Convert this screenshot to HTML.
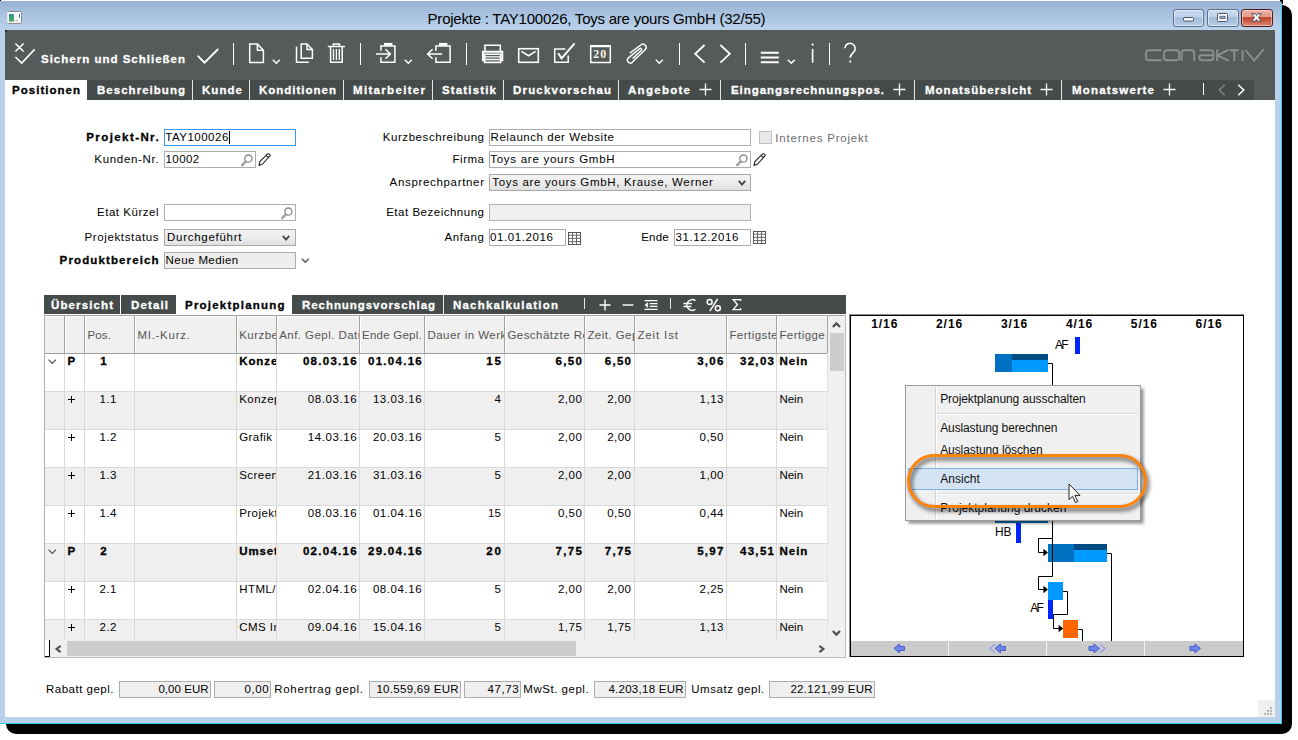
<!DOCTYPE html>
<html><head><meta charset="utf-8"><title>Projekte</title><style>
html,body{margin:0;padding:0;}
body{width:1298px;height:740px;overflow:hidden;background:#fff;position:relative;font-family:"Liberation Sans",sans-serif;}
.a{position:absolute;box-sizing:border-box;}
.t{position:absolute;white-space:pre;display:block;}
svg{position:absolute;overflow:visible;}
.inp{position:absolute;box-sizing:border-box;border:1px solid #abadb3;background:#fff;}
.sel{position:absolute;box-sizing:border-box;border:1px solid #a9a9a9;background:linear-gradient(#f3f3f3,#ededed 45%,#e1e1e1);}
.ro{position:absolute;box-sizing:border-box;border:1px solid #b4b4b4;background:#efefef;}
</style></head><body>
<div class="a" style="left:6px;top:5px;width:1286px;height:729px;background:#000;border-radius:10px;"></div>
<div class="a" style="left:0px;top:0px;width:1px;height:1px;background:#000;"></div>
<div class="a" style="left:1280px;top:0px;width:3px;height:4px;background:#000;"></div>
<div class="a" style="left:0px;top:1px;width:1282px;height:723px;background:linear-gradient(#98b3d3 0px,#a9c3e0 14px,#bbd2ea 29px,#b9d1ea 30px);border-top-right-radius:3px;"></div>
<div class="a" style="left:1281px;top:4px;width:1px;height:720px;background:#2fd0f0;"></div>
<div class="a" style="left:0px;top:723px;width:1282px;height:1px;background:#2fd0f0;"></div>
<div class="a" style="left:5px;top:30px;width:1270px;height:687px;background:#fff;"></div>
<svg style="left:7px;top:11px" width="15" height="13" viewBox="0 0 15 13"><defs><linearGradient id="ig" x1="0" y1="0" x2="0.4" y2="1"><stop offset="0" stop-color="#3a78b8"/><stop offset="0.45" stop-color="#3f9a8a"/><stop offset="1" stop-color="#43ad5e"/></linearGradient><linearGradient id="ih" x1="0" y1="0" x2="0" y2="1"><stop offset="0" stop-color="#2f66b8"/><stop offset="1" stop-color="#4aa84a"/></linearGradient></defs><rect x="0.5" y="0.5" width="14" height="12" rx="1" fill="#f6f6f6" stroke="#8a8a8a"/><path d="M0.5 1 V12" stroke="#e8e8e8"/><rect x="2" y="3" width="5" height="7.6" fill="url(#ig)"/><rect x="8.4" y="9" width="2.8" height="1.6" fill="#c4c4c4"/><rect x="12" y="3" width="1" height="3.8" fill="url(#ih)"/></svg>
<span class="t" style="left:427.60px;top:11.00px;font-size:15px;line-height:15px;color:#000;letter-spacing:-0.230px;">Projekte : TAY100026, Toys are yours GmbH (32/55)</span>
<div class="a" style="left:1173px;top:9px;width:31px;height:18px;border:1px solid #5b6f8e;border-radius:3px;background:linear-gradient(#c6d8ee 0,#bed2ea 46%,#a3bcda 47%,#b4cae4 100%);box-shadow:inset 0 0 0 1px rgba(255,255,255,.55);"></div>
<div class="a" style="left:1207px;top:9px;width:32px;height:18px;border:1px solid #5b6f8e;border-radius:3px;background:linear-gradient(#c6d8ee 0,#bed2ea 46%,#a3bcda 47%,#b4cae4 100%);box-shadow:inset 0 0 0 1px rgba(255,255,255,.55);"></div>
<div class="a" style="left:1241px;top:9px;width:32px;height:18px;border:1px solid #561820;border-radius:3px;background:linear-gradient(#eab0a2 0,#e39a89 46%,#c1442a 47%,#d98570 100%);box-shadow:inset 0 0 0 1px rgba(255,255,255,.45);"></div>
<svg style="left:1183px;top:17px" width="11" height="5" viewBox="0 0 11 5"><rect x="0.5" y="0.5" width="10" height="3.6" rx="1" fill="#f6f6f6" stroke="#4a5670"/></svg>
<svg style="left:1217px;top:13px" width="11" height="9" viewBox="0 0 11 9"><rect x="0.5" y="0.5" width="10" height="8" rx="1" fill="#f6f6f6" stroke="#4a5670"/><rect x="3" y="3.3" width="5" height="2.2" fill="#9ab3d3" stroke="#4a5670" stroke-width=".8"/></svg>
<svg style="left:1251px;top:13px" width="11" height="9" viewBox="0 0 11 9"><path d="M0.7 0.7 L4.1 0.7 L5.5 2.5 L6.9 0.7 L10.3 0.7 L7.5 4.5 L10.3 8.3 L6.9 8.3 L5.5 6.5 L4.1 8.3 L0.7 8.3 L3.5 4.5 Z" fill="#f8f8f8" stroke="#4a4660" stroke-width=".9" stroke-linejoin="round"/></svg>
<div class="a" style="left:5px;top:30px;width:1270px;height:70px;background:#545b5a;"></div>
<div class="a" style="left:5px;top:30px;width:2px;height:2px;background:#111;border-bottom-right-radius:2px;"></div>
<svg style="left:14px;top:42px" width="22" height="24" viewBox="0 0 22 24" fill="none" stroke="#fff" stroke-width="1.6" ><path d="M1.4 1.5 L9.6 9.5 M9.6 1.5 L1.4 9.5"/><path d="M1.4 15 L7.7 21 L20.6 7.4"/></svg>
<span class="t" style="left:41.00px;top:54.00px;font-size:11.5px;line-height:11.5px;color:#fff;font-weight:bold;-webkit-text-stroke:0.3px;letter-spacing:1.002px;">Sichern und Schließen</span>
<svg style="left:197px;top:48px" width="22" height="17" viewBox="0 0 22 17" fill="none" stroke="#fff" stroke-width="1.9" ><path d="M1.3 8.3 L7.5 14.7 L20.7 1.5" stroke-linecap="round"/></svg>
<div class="a" style="left:232.85px;top:43px;width:1.3499999999999943px;height:22px;background:#fff;"></div>
<div class="a" style="left:359.85px;top:43px;width:1.349999999999966px;height:22px;background:#fff;"></div>
<div class="a" style="left:465.85px;top:43px;width:1.349999999999966px;height:22px;background:#fff;"></div>
<div class="a" style="left:678.85px;top:43px;width:1.3500000000000227px;height:22px;background:#fff;"></div>
<div class="a" style="left:744.85px;top:43px;width:1.3500000000000227px;height:22px;background:#fff;"></div>
<div class="a" style="left:828.85px;top:43px;width:1.3500000000000227px;height:22px;background:#fff;"></div>
<svg style="left:248px;top:43px" width="18" height="21" viewBox="0 0 18 21" fill="none" stroke="#fff" stroke-width="1.5" ><path d="M1.7 1.1 H9.4 L15.4 7.2 V19.4 H1.7 Z"/><path d="M9.4 1.1 V7.2 H15.4"/></svg>
<svg style="left:272px;top:59px" width="9" height="6" viewBox="0 0 9 6" fill="none" stroke="#fff" stroke-width="1.5" ><path d="M0.8 0.8 L4.3 4.2 L7.8 0.8"/></svg>
<svg style="left:295px;top:43px" width="20" height="21" viewBox="0 0 20 21" fill="none" stroke="#fff" stroke-width="1.5" ><path d="M6.2 1 H12 L17.4 6.6 V15.2 H6.2 Z"/><path d="M12 1 V6.6 H17.4"/><path d="M1.5 3.6 V19.2 H13.8"/></svg>
<svg style="left:327px;top:42px" width="19" height="22" viewBox="0 0 19 22" fill="none" stroke="#fff" stroke-width="1.5" ><path d="M0.8 4.5 H18"/><path d="M6.4 4.4 V2 H12.4 V4.4"/><path d="M3.6 4.8 V20.2 H15.2 V4.8"/><path d="M6.5 7 V18 M9.4 7 V18 M12.3 7 V18" stroke-width="1.3"/></svg>
<svg style="left:375px;top:42px" width="23" height="22" viewBox="0 0 23 22" fill="none" stroke="#fff" stroke-width="1.5" ><path d="M5.9 8.8 V3.9 H19.9 V20.3 H5.9 V15.2"/><path d="M9 2.3 H17.4" stroke-width="2.8"/><path d="M1 12 H15 M10.4 7.2 L15.4 12 L10.4 16.8"/></svg>
<svg style="left:403.5px;top:59px" width="9" height="6" viewBox="0 0 9 6" fill="none" stroke="#fff" stroke-width="1.5" ><path d="M0.8 0.8 L4.3 4.2 L7.8 0.8"/></svg>
<svg style="left:426px;top:42px" width="26" height="22" viewBox="0 0 26 22" fill="none" stroke="#fff" stroke-width="1.5" ><path d="M9.9 8.8 V3.9 H24.1 V20.3 H9.9 V15.2"/><path d="M13 2.3 H21.4" stroke-width="2.8"/><path d="M16.2 12 H2 M6.6 7.2 L1.6 12 L6.6 16.8"/></svg>
<svg style="left:481px;top:43px" width="24" height="21" viewBox="0 0 24 21" fill="none" stroke="#fff" stroke-width="1.6" ><path d="M3.9 8 V2.2 H19.3 V8"/><path d="M3.6 17.2 H1.9 V8.8 H21.3 V17.2 H19.6" stroke-width="2"/><path d="M3.6 11.2 H19.6 V19.4 H3.6 Z"/><path d="M4 13.9 H19.2 M4 16.5 H19.2" stroke-width="1.3"/></svg>
<svg style="left:517px;top:47px" width="23" height="17" viewBox="0 0 23 17" fill="none" stroke="#fff" stroke-width="1.6" ><rect x="1.7" y="1.7" width="19.6" height="13.6"/><path d="M4.4 4.4 L11.5 8.8 L18.6 4.4"/></svg>
<svg style="left:553px;top:42px" width="23" height="22" viewBox="0 0 23 22" fill="none" stroke="#fff" stroke-width="1.5" ><path d="M15.2 13.4 V20.2 H1.7 V7.1 H12.4"/><path d="M5.2 11.2 L8.6 16.4 L21.6 1.4" stroke-width="2"/></svg>
<svg style="left:589px;top:44px" width="23" height="20" viewBox="0 0 23 20" fill="none" stroke="#fff" stroke-width="1.5" ><rect x="1.7" y="1.9" width="19.6" height="16.6"/><path d="M1 2.1 H22" stroke-width="2.2"/></svg>
<span class="t" style="left:593.20px;top:48.00px;font-size:12px;line-height:12px;color:#f6f0e2;font-weight:bold;letter-spacing:1.052px;font-family:'Liberation Serif',serif;">20</span>
<svg style="left:0px;top:0px" width="1298" height="740" viewBox="0 0 1298 740" fill="none" stroke="#fff" stroke-width="1.4" ><path transform="translate(626.6,61.6) rotate(-41)" d="M8 -4.3 L21.6 -3.2 A3.2 3.2 0 0 1 21.6 3.2 L3.8 4.3 A2.95 2.95 0 0 1 3.8 -1.6 L18.4 -1.15 A1.15 1.15 0 0 1 18.4 1.15 L6.5 1.7"/></svg>
<svg style="left:654.5px;top:59px" width="9" height="6" viewBox="0 0 9 6" fill="none" stroke="#fff" stroke-width="1.5" ><path d="M0.8 0.8 L4.3 4.2 L7.8 0.8"/></svg>
<svg style="left:694px;top:44px" width="12" height="20" viewBox="0 0 12 20" fill="none" stroke="#fff" stroke-width="1.8" ><path d="M10.6 1 L1.2 9.8 L10.6 18.6"/></svg>
<svg style="left:719px;top:44px" width="12" height="20" viewBox="0 0 12 20" fill="none" stroke="#fff" stroke-width="1.8" ><path d="M1.4 1 L10.8 9.8 L1.4 18.6"/></svg>
<svg style="left:760px;top:50px" width="20" height="14" viewBox="0 0 20 14" fill="none" stroke="#fff" stroke-width="1.9" ><path d="M0.8 2.7 H18.8 M0.8 7.5 H18.8 M0.8 12.3 H18.8"/></svg>
<svg style="left:786.5px;top:59px" width="9" height="6" viewBox="0 0 9 6" fill="none" stroke="#fff" stroke-width="1.5" ><path d="M0.8 0.8 L4.3 4.2 L7.8 0.8"/></svg>
<svg style="left:808px;top:42px" width="10" height="22" viewBox="0 0 10 22" fill="none" stroke="#fff" stroke-width="1.6" ><path d="M4.6 7 V20.8" stroke-width="1.6"/><circle cx="4.6" cy="2.6" r="1.1" fill="#fff" stroke="none"/></svg>
<svg style="left:843px;top:42px" width="15" height="22" viewBox="0 0 15 22" fill="none" stroke="#fff" stroke-width="1.6" ><path d="M1.8 6.2 a5.2 5.2 0 1 1 8.4 4.4 C8 12.4 7.2 13.2 7.2 15.8" stroke-width="1.6"/><circle cx="7.2" cy="19.6" r="1.1" fill="#fff" stroke="none"/></svg>
<svg style="left:1145px;top:49px" width="120" height="13" viewBox="0 0 120 13" fill="none" stroke="#8b9190" stroke-width="1.9" ><path d="M16.6 1.2 H4 Q1 1.2 1 4 V8.4 Q1 11.2 4 11.2 H16.6"/><rect x="19" y="1.2" width="15.2" height="10" rx="2.8"/><path d="M36.6 12 V4 Q36.6 1.2 39.4 1.2 H46.4 Q49.2 1.2 49.2 4 V12"/><path d="M54.6 1.2 H65.6 Q68.4 1.2 68.4 4 V8.4 Q68.4 11.2 65.6 11.2 H57 Q54.2 11.2 54.2 8.6 Q54.2 6.2 57 6.2 H68.4"/><path d="M72.2 0.4 V12 M83.6 0.6 L72.6 6.4 L83.8 11.8"/><path d="M84.8 1.2 H93.8 M89.3 1.2 V12"/><path d="M97.6 1.2 V12"/><path d="M100.4 1 L109.2 11.6 L118.6 0.4"/></svg>
<div class="a" style="left:5px;top:80px;width:1248.5px;height:20px;background:#454b4a;"></div>
<div class="a" style="left:5px;top:80px;width:82px;height:20px;background:#fff;"></div>
<span class="t" style="left:12.00px;top:85.00px;font-size:11.5px;line-height:11.5px;color:#000;font-weight:bold;-webkit-text-stroke:0.3px;letter-spacing:1.024px;">Positionen</span>
<span class="t" style="left:97.00px;top:85.00px;font-size:11.5px;line-height:11.5px;color:#fff;font-weight:bold;-webkit-text-stroke:0.3px;letter-spacing:1.029px;">Beschreibung</span>
<span class="t" style="left:202.00px;top:85.00px;font-size:11.5px;line-height:11.5px;color:#fff;font-weight:bold;-webkit-text-stroke:0.3px;letter-spacing:1.056px;">Kunde</span>
<span class="t" style="left:259.00px;top:85.00px;font-size:11.5px;line-height:11.5px;color:#fff;font-weight:bold;-webkit-text-stroke:0.3px;letter-spacing:0.993px;">Konditionen</span>
<span class="t" style="left:353.00px;top:85.00px;font-size:11.5px;line-height:11.5px;color:#fff;font-weight:bold;-webkit-text-stroke:0.3px;letter-spacing:1.321px;">Mitarbeiter</span>
<span class="t" style="left:442.00px;top:85.00px;font-size:11.5px;line-height:11.5px;color:#fff;font-weight:bold;-webkit-text-stroke:0.3px;letter-spacing:1.158px;">Statistik</span>
<span class="t" style="left:513.00px;top:85.00px;font-size:11.5px;line-height:11.5px;color:#fff;font-weight:bold;-webkit-text-stroke:0.3px;letter-spacing:1.189px;">Druckvorschau</span>
<span class="t" style="left:628.00px;top:85.00px;font-size:11.5px;line-height:11.5px;color:#fff;font-weight:bold;-webkit-text-stroke:0.3px;letter-spacing:1.282px;">Angebote</span>
<span class="t" style="left:731.00px;top:85.00px;font-size:11.5px;line-height:11.5px;color:#fff;font-weight:bold;-webkit-text-stroke:0.3px;letter-spacing:0.941px;">Eingangsrechnungspos.</span>
<span class="t" style="left:925.00px;top:85.00px;font-size:11.5px;line-height:11.5px;color:#fff;font-weight:bold;-webkit-text-stroke:0.3px;letter-spacing:0.999px;">Monatsübersicht</span>
<span class="t" style="left:1072.00px;top:85.00px;font-size:11.5px;line-height:11.5px;color:#fff;font-weight:bold;-webkit-text-stroke:0.3px;letter-spacing:1.171px;">Monatswerte</span>
<div class="a" style="left:192px;top:80px;width:1px;height:20px;background:#e4e6e6;"></div>
<div class="a" style="left:249px;top:80px;width:1px;height:20px;background:#e4e6e6;"></div>
<div class="a" style="left:343px;top:80px;width:1px;height:20px;background:#e4e6e6;"></div>
<div class="a" style="left:432px;top:80px;width:1px;height:20px;background:#e4e6e6;"></div>
<div class="a" style="left:503px;top:80px;width:1px;height:20px;background:#e4e6e6;"></div>
<div class="a" style="left:618px;top:80px;width:1px;height:20px;background:#e4e6e6;"></div>
<div class="a" style="left:720px;top:80px;width:1px;height:20px;background:#e4e6e6;"></div>
<div class="a" style="left:914px;top:80px;width:1px;height:20px;background:#e4e6e6;"></div>
<div class="a" style="left:1061px;top:80px;width:1px;height:20px;background:#e4e6e6;"></div>
<svg style="left:699px;top:83px" width="13" height="13" viewBox="0 0 13 13" fill="none" stroke="#fff" stroke-width="1.3" ><path d="M6.5 0.5 V12.5 M0.5 6.5 H12.5"/></svg>
<svg style="left:893px;top:83px" width="13" height="13" viewBox="0 0 13 13" fill="none" stroke="#fff" stroke-width="1.3" ><path d="M6.5 0.5 V12.5 M0.5 6.5 H12.5"/></svg>
<svg style="left:1040px;top:83px" width="13" height="13" viewBox="0 0 13 13" fill="none" stroke="#fff" stroke-width="1.3" ><path d="M6.5 0.5 V12.5 M0.5 6.5 H12.5"/></svg>
<svg style="left:1163px;top:83px" width="13" height="13" viewBox="0 0 13 13" fill="none" stroke="#fff" stroke-width="1.3" ><path d="M6.5 0.5 V12.5 M0.5 6.5 H12.5"/></svg>
<div class="a" style="left:1203px;top:83px;width:1px;height:12px;background:#fff;"></div>
<svg style="left:1218px;top:84px" width="8" height="12" viewBox="0 0 8 12" fill="none" stroke="#7f8685" stroke-width="1.4" ><path d="M6.8 0.8 L1.2 6 L6.8 11.2"/></svg>
<svg style="left:1237px;top:84px" width="8" height="12" viewBox="0 0 8 12" fill="none" stroke="#fff" stroke-width="1.5" ><path d="M1.2 0.8 L6.8 6 L1.2 11.2"/></svg>
<span class="t" style="left:86.20px;top:132.00px;font-size:11.5px;line-height:11.5px;color:#000;font-weight:bold;-webkit-text-stroke:0.3px;letter-spacing:1.424px;">Projekt-Nr.</span>
<span class="t" style="left:94.30px;top:154.00px;font-size:11.5px;line-height:11.5px;color:#000;letter-spacing:0.681px;">Kunden-Nr.</span>
<span class="t" style="left:97.00px;top:207.00px;font-size:11.5px;line-height:11.5px;color:#000;letter-spacing:0.535px;">Etat Kürzel</span>
<span class="t" style="left:84.40px;top:232.00px;font-size:11.5px;line-height:11.5px;color:#000;letter-spacing:0.644px;">Projektstatus</span>
<span class="t" style="left:59.60px;top:255.00px;font-size:11.5px;line-height:11.5px;color:#000;font-weight:bold;-webkit-text-stroke:0.3px;letter-spacing:1.127px;">Produktbereich</span>
<span class="t" style="left:382.70px;top:132.00px;font-size:11.5px;line-height:11.5px;color:#000;letter-spacing:0.574px;">Kurzbeschreibung</span>
<span class="t" style="left:452.50px;top:154.00px;font-size:11.5px;line-height:11.5px;color:#000;letter-spacing:0.529px;">Firma</span>
<span class="t" style="left:389.60px;top:177.00px;font-size:11.5px;line-height:11.5px;color:#000;letter-spacing:0.670px;">Ansprechpartner</span>
<span class="t" style="left:386.20px;top:207.00px;font-size:11.5px;line-height:11.5px;color:#000;letter-spacing:0.510px;">Etat Bezeichnung</span>
<span class="t" style="left:444.40px;top:232.00px;font-size:11.5px;line-height:11.5px;color:#000;letter-spacing:0.630px;">Anfang</span>
<span class="t" style="left:641.20px;top:232.00px;font-size:11.5px;line-height:11.5px;color:#000;letter-spacing:0.214px;">Ende</span>
<div class="inp" style="left:164px;top:129px;width:132px;height:17px;border-color:#3399ff;"></div>
<div class="inp" style="left:164px;top:151px;width:92px;height:17px;"></div>
<div class="inp" style="left:164px;top:204px;width:132px;height:17px;"></div>
<div class="sel" style="left:164px;top:229px;width:132px;height:17px;"></div>
<div class="sel" style="left:164px;top:252px;width:132px;height:17px;border-color:#abadb3;background:#eeeeee;"></div>
<div class="inp" style="left:489px;top:129px;width:262px;height:17px;"></div>
<div class="inp" style="left:489px;top:151px;width:262px;height:17px;"></div>
<div class="sel" style="left:489px;top:174px;width:262px;height:17px;"></div>
<div class="ro" style="left:489px;top:204px;width:262px;height:17px;"></div>
<div class="inp" style="left:489px;top:229px;width:77px;height:17px;"></div>
<div class="inp" style="left:674px;top:229px;width:77px;height:17px;"></div>
<span class="t" style="left:165.30px;top:132.00px;font-size:11.5px;line-height:11.5px;color:#000;letter-spacing:0.496px;">TAY100026</span>
<div class="a" style="left:228.6px;top:131px;width:1.0px;height:13px;background:#000;"></div>
<span class="t" style="left:165.60px;top:154.00px;font-size:11.5px;line-height:11.5px;color:#000;letter-spacing:0.380px;">10002</span>
<span class="t" style="left:167.00px;top:232.00px;font-size:11.5px;line-height:11.5px;color:#000;letter-spacing:0.720px;">Durchgeführt</span>
<span class="t" style="left:165.60px;top:255.00px;font-size:11.5px;line-height:11.5px;color:#000;letter-spacing:0.419px;">Neue Medien</span>
<span class="t" style="left:490.60px;top:132.00px;font-size:11.5px;line-height:11.5px;color:#000;letter-spacing:0.540px;">Relaunch der Website</span>
<span class="t" style="left:490.20px;top:154.00px;font-size:11.5px;line-height:11.5px;color:#000;letter-spacing:0.733px;">Toys are yours GmbH</span>
<span class="t" style="left:492.30px;top:177.00px;font-size:11.5px;line-height:11.5px;color:#000;letter-spacing:0.667px;">Toys are yours GmbH, Krause, Werner</span>
<span class="t" style="left:490.00px;top:232.00px;font-size:11.5px;line-height:11.5px;color:#000;letter-spacing:0.605px;">01.01.2016</span>
<span class="t" style="left:675.50px;top:232.00px;font-size:11.5px;line-height:11.5px;color:#000;letter-spacing:0.605px;">31.12.2016</span>
<div class="a" style="left:759px;top:131px;width:13px;height:13px;background:#e8e8e8;border:1px solid #c0c0c0;"></div>
<span class="t" style="left:775.30px;top:133.00px;font-size:11.5px;line-height:11.5px;color:#6d6d6d;letter-spacing:0.797px;">Internes Projekt</span>
<svg style="left:241px;top:153.5px" width="12" height="12" viewBox="0 0 12 12" fill="none" stroke="#fff" stroke-width="1.6" ><path d="M4.8 7.4 L1.2 11.2" stroke="#a2a2a2" stroke-width="2.4" stroke-linecap="round"/><circle cx="7.4" cy="4.6" r="3.6" stroke="#8a8a8a" stroke-width="1.3" fill="#fff"/></svg>
<svg style="left:281px;top:206.5px" width="12" height="12" viewBox="0 0 12 12" fill="none" stroke="#fff" stroke-width="1.6" ><path d="M4.8 7.4 L1.2 11.2" stroke="#a2a2a2" stroke-width="2.4" stroke-linecap="round"/><circle cx="7.4" cy="4.6" r="3.6" stroke="#8a8a8a" stroke-width="1.3" fill="#fff"/></svg>
<svg style="left:736px;top:153.5px" width="12" height="12" viewBox="0 0 12 12" fill="none" stroke="#fff" stroke-width="1.6" ><path d="M4.8 7.4 L1.2 11.2" stroke="#a2a2a2" stroke-width="2.4" stroke-linecap="round"/><circle cx="7.4" cy="4.6" r="3.6" stroke="#8a8a8a" stroke-width="1.3" fill="#fff"/></svg>
<svg style="left:258.4px;top:153.2px" width="14" height="13" viewBox="0 0 14 13" fill="none" stroke="#fff" stroke-width="1.6" ><path d="M9.6 0.9 Q11.6 0.4 12.3 2.4 L4.6 11 L1 12.4 L1.8 8.6 Z M8 2.6 L10.8 4.6" stroke="#222" stroke-width="1.1" stroke-linejoin="round"/></svg>
<svg style="left:753.4px;top:153.2px" width="14" height="13" viewBox="0 0 14 13" fill="none" stroke="#fff" stroke-width="1.6" ><path d="M9.6 0.9 Q11.6 0.4 12.3 2.4 L4.6 11 L1 12.4 L1.8 8.6 Z M8 2.6 L10.8 4.6" stroke="#222" stroke-width="1.1" stroke-linejoin="round"/></svg>
<svg style="left:282.4px;top:234.8px" width="8" height="7" viewBox="0 0 8 7" fill="none" stroke="#444" stroke-width="1.9" ><path d="M0.8 0.9 L4 4.6 L7.2 0.9"/></svg>
<svg style="left:737.6px;top:179.6px" width="8" height="7" viewBox="0 0 8 7" fill="none" stroke="#444" stroke-width="1.9" ><path d="M0.8 0.9 L4 4.6 L7.2 0.9"/></svg>
<svg style="left:301px;top:258px" width="9" height="6" viewBox="0 0 9 6" fill="none" stroke="#555" stroke-width="1.4" ><path d="M0.8 0.8 L4.3 4.2 L7.8 0.8"/></svg>
<svg style="left:568px;top:232px" width="13" height="13" viewBox="0 0 13 13" fill="none" stroke="#fff" stroke-width="1.6" ><rect x="0.5" y="0.5" width="12" height="12" fill="#fff" stroke="#555" stroke-width="1"/><path d="M0.5 3.2 H12.5 M0.5 6.4 H12.5 M0.5 9.6 H12.5 M4.5 0.5 V12.5 M8.5 0.5 V12.5" stroke="#666" stroke-width="1"/></svg>
<svg style="left:753px;top:231.3px" width="13" height="13" viewBox="0 0 13 13" fill="none" stroke="#fff" stroke-width="1.6" ><rect x="0.5" y="0.5" width="12" height="12" fill="#fff" stroke="#555" stroke-width="1"/><path d="M0.5 3.2 H12.5 M0.5 6.4 H12.5 M0.5 9.6 H12.5 M4.5 0.5 V12.5 M8.5 0.5 V12.5" stroke="#666" stroke-width="1"/></svg>
<div class="a" style="left:44px;top:295px;width:802px;height:19px;background:#454b4a;"></div>
<div class="a" style="left:176px;top:295px;width:116px;height:19px;background:#fff;"></div>
<div class="a" style="left:120px;top:295px;width:1px;height:19px;background:#fff;"></div>
<div class="a" style="left:442.7px;top:295px;width:1.0px;height:19px;background:#e8e8e8;"></div>
<span class="t" style="left:51.00px;top:300.00px;font-size:11.5px;line-height:11.5px;color:#fff;font-weight:bold;-webkit-text-stroke:0.3px;letter-spacing:1.120px;">Übersicht</span>
<span class="t" style="left:131.00px;top:300.00px;font-size:11.5px;line-height:11.5px;color:#fff;font-weight:bold;-webkit-text-stroke:0.3px;letter-spacing:1.137px;">Detail</span>
<span class="t" style="left:185.00px;top:300.00px;font-size:11.5px;line-height:11.5px;color:#000;font-weight:bold;-webkit-text-stroke:0.3px;letter-spacing:1.215px;">Projektplanung</span>
<span class="t" style="left:302.00px;top:300.00px;font-size:11.5px;line-height:11.5px;color:#fff;font-weight:bold;-webkit-text-stroke:0.3px;letter-spacing:0.945px;">Rechnungsvorschlag</span>
<span class="t" style="left:453.00px;top:300.00px;font-size:11.5px;line-height:11.5px;color:#fff;font-weight:bold;-webkit-text-stroke:0.3px;letter-spacing:1.200px;">Nachkalkulation</span>
<div class="a" style="left:584px;top:298px;width:1px;height:11px;background:#e6e6e6;"></div>
<svg style="left:598.5px;top:298.5px" width="12" height="12" viewBox="0 0 12 12" fill="none" stroke="#fff" stroke-width="1.4" ><path d="M6 0.5 V11.5 M0.5 6 H11.5"/></svg>
<svg style="left:622px;top:298.5px" width="12" height="12" viewBox="0 0 12 12" fill="none" stroke="#fff" stroke-width="1.4" ><path d="M0.5 6 H11.5"/></svg>
<svg style="left:644px;top:298.5px" width="14" height="12" viewBox="0 0 14 12" fill="none" stroke="#fff" stroke-width="1.6" ><path d="M0.5 1.6 H13.5 M5.6 4.6 H13.5 M5.6 7.4 H13.5 M0.5 10.4 H13.5" stroke-width="1.2"/><path d="M3.6 3.6 L1 6 L3.6 8.4 Z" fill="#fff" stroke-width=".6"/></svg>
<div class="a" style="left:670px;top:298px;width:1px;height:11px;background:#e6e6e6;"></div>
<svg style="left:683px;top:297.5px" width="14" height="14" viewBox="0 0 14 14" fill="none" stroke="#fff" stroke-width="1.5" ><path d="M12.4 2.6 A5.4 5.4 0 1 0 12.4 11.4 M0.4 5.6 H9 M0.4 8.4 H8.4"/></svg>
<svg style="left:706px;top:297.5px" width="16" height="14" viewBox="0 0 16 14" fill="none" stroke="#fff" stroke-width="1.5" ><circle cx="3.6" cy="4" r="2.5"/><circle cx="11.8" cy="10.2" r="2.5"/><path d="M11.6 1 L3.8 13.2"/></svg>
<svg style="left:731.5px;top:298px" width="10" height="13" viewBox="0 0 10 13" fill="none" stroke="#fff" stroke-width="1.4" ><path d="M8.6 3 V1.6 H1.2 L5.4 6.6 L1.2 11.6 H8.6 V10.2"/></svg>
<div class="a" style="left:44px;top:315px;width:802px;height:39px;background:#f0f0f0;border-top:1px solid #a3a3a3;"></div>
<div class="a" style="left:45px;top:316px;width:782px;height:1px;background:#fff;"></div>
<div class="a" style="left:44px;top:353px;width:783px;height:1px;background:#a0a0a0;"></div>
<div class="a" style="left:64px;top:316px;width:1px;height:37px;background:#a3a3a3;"></div>
<div class="a" style="left:65px;top:316px;width:1px;height:37px;background:#fff;"></div>
<div class="a" style="left:84px;top:316px;width:1px;height:37px;background:#a3a3a3;"></div>
<div class="a" style="left:85px;top:316px;width:1px;height:37px;background:#fff;"></div>
<div class="a" style="left:134px;top:316px;width:1px;height:37px;background:#a3a3a3;"></div>
<div class="a" style="left:135px;top:316px;width:1px;height:37px;background:#fff;"></div>
<div class="a" style="left:236px;top:316px;width:1px;height:37px;background:#a3a3a3;"></div>
<div class="a" style="left:237px;top:316px;width:1px;height:37px;background:#fff;"></div>
<div class="a" style="left:276px;top:316px;width:1px;height:37px;background:#a3a3a3;"></div>
<div class="a" style="left:277px;top:316px;width:1px;height:37px;background:#fff;"></div>
<div class="a" style="left:359px;top:316px;width:1px;height:37px;background:#a3a3a3;"></div>
<div class="a" style="left:360px;top:316px;width:1px;height:37px;background:#fff;"></div>
<div class="a" style="left:424px;top:316px;width:1px;height:37px;background:#a3a3a3;"></div>
<div class="a" style="left:425px;top:316px;width:1px;height:37px;background:#fff;"></div>
<div class="a" style="left:504px;top:316px;width:1px;height:37px;background:#a3a3a3;"></div>
<div class="a" style="left:505px;top:316px;width:1px;height:37px;background:#fff;"></div>
<div class="a" style="left:584px;top:316px;width:1px;height:37px;background:#a3a3a3;"></div>
<div class="a" style="left:585px;top:316px;width:1px;height:37px;background:#fff;"></div>
<div class="a" style="left:634px;top:316px;width:1px;height:37px;background:#a3a3a3;"></div>
<div class="a" style="left:635px;top:316px;width:1px;height:37px;background:#fff;"></div>
<div class="a" style="left:726px;top:316px;width:1px;height:37px;background:#a3a3a3;"></div>
<div class="a" style="left:727px;top:316px;width:1px;height:37px;background:#fff;"></div>
<div class="a" style="left:776px;top:316px;width:1px;height:37px;background:#a3a3a3;"></div>
<div class="a" style="left:777px;top:316px;width:1px;height:37px;background:#fff;"></div>
<div class="a" style="left:827px;top:316px;width:1px;height:37px;background:#a3a3a3;"></div>
<div class="a" style="left:828px;top:316px;width:1px;height:37px;background:#fff;"></div>
<div class="a" style="left:44px;top:315px;width:1px;height:342px;background:#b0b0b0;"></div>
<span class="t" style="left:87.40px;top:330.00px;font-size:11.5px;line-height:11.5px;color:#555;letter-spacing:0.196px;">Pos.</span>
<span class="t" style="left:137.40px;top:330.00px;font-size:11.5px;line-height:11.5px;color:#555;letter-spacing:0.732px;">MI.-Kurz.</span>
<span class="t" style="left:239.20px;top:330.00px;font-size:11.5px;line-height:11.5px;color:#555;width:36.80px;overflow:hidden;letter-spacing:0.45px;">Kurzbeschr</span>
<span class="t" style="left:279.20px;top:330.00px;font-size:11.5px;line-height:11.5px;color:#555;width:79.80px;overflow:hidden;letter-spacing:0.45px;">Anf. Gepl. Datum</span>
<span class="t" style="left:362.10px;top:330.00px;font-size:11.5px;line-height:11.5px;color:#555;letter-spacing:0.229px;">Ende Gepl.</span>
<span class="t" style="left:427.50px;top:330.00px;font-size:11.5px;line-height:11.5px;color:#555;width:76.50px;overflow:hidden;letter-spacing:0.45px;">Dauer in Werkt</span>
<span class="t" style="left:507.40px;top:330.00px;font-size:11.5px;line-height:11.5px;color:#555;width:76.60px;overflow:hidden;letter-spacing:0.45px;">Geschätzte Rest</span>
<span class="t" style="left:587.40px;top:330.00px;font-size:11.5px;line-height:11.5px;color:#555;width:46.60px;overflow:hidden;letter-spacing:0.45px;">Zeit. Gepl</span>
<span class="t" style="left:637.40px;top:330.00px;font-size:11.5px;line-height:11.5px;color:#555;letter-spacing:0.871px;">Zeit Ist</span>
<span class="t" style="left:729.40px;top:330.00px;font-size:11.5px;line-height:11.5px;color:#555;width:46.60px;overflow:hidden;letter-spacing:0.45px;">Fertigstell</span>
<span class="t" style="left:779.40px;top:330.00px;font-size:11.5px;line-height:11.5px;color:#555;width:47.10px;overflow:hidden;letter-spacing:0.45px;">Fertiggest</span>
<div class="a" style="left:45px;top:354px;width:782px;height:37px;background:#fff;"></div>
<div class="a" style="left:45px;top:391px;width:782px;height:38px;background:#efefef;"></div>
<div class="a" style="left:45px;top:391px;width:782px;height:1px;background:#d9d9d9;"></div>
<div class="a" style="left:45px;top:429px;width:782px;height:38px;background:#fff;"></div>
<div class="a" style="left:45px;top:429px;width:782px;height:1px;background:#d9d9d9;"></div>
<div class="a" style="left:45px;top:467px;width:782px;height:38px;background:#efefef;"></div>
<div class="a" style="left:45px;top:467px;width:782px;height:1px;background:#d9d9d9;"></div>
<div class="a" style="left:45px;top:505px;width:782px;height:38px;background:#fff;"></div>
<div class="a" style="left:45px;top:505px;width:782px;height:1px;background:#d9d9d9;"></div>
<div class="a" style="left:45px;top:543px;width:782px;height:38px;background:#efefef;"></div>
<div class="a" style="left:45px;top:543px;width:782px;height:1px;background:#d9d9d9;"></div>
<div class="a" style="left:45px;top:581px;width:782px;height:38px;background:#fff;"></div>
<div class="a" style="left:45px;top:581px;width:782px;height:1px;background:#d9d9d9;"></div>
<div class="a" style="left:45px;top:619px;width:782px;height:21px;background:#efefef;"></div>
<div class="a" style="left:45px;top:619px;width:782px;height:1px;background:#d9d9d9;"></div>
<div class="a" style="left:64px;top:354px;width:1px;height:286px;background:#d9d9d9;"></div>
<div class="a" style="left:84px;top:354px;width:1px;height:286px;background:#d9d9d9;"></div>
<div class="a" style="left:134px;top:354px;width:1px;height:286px;background:#d9d9d9;"></div>
<div class="a" style="left:236px;top:354px;width:1px;height:286px;background:#d9d9d9;"></div>
<div class="a" style="left:276px;top:354px;width:1px;height:286px;background:#d9d9d9;"></div>
<div class="a" style="left:359px;top:354px;width:1px;height:286px;background:#d9d9d9;"></div>
<div class="a" style="left:424px;top:354px;width:1px;height:286px;background:#d9d9d9;"></div>
<div class="a" style="left:504px;top:354px;width:1px;height:286px;background:#d9d9d9;"></div>
<div class="a" style="left:584px;top:354px;width:1px;height:286px;background:#d9d9d9;"></div>
<div class="a" style="left:634px;top:354px;width:1px;height:286px;background:#d9d9d9;"></div>
<div class="a" style="left:726px;top:354px;width:1px;height:286px;background:#d9d9d9;"></div>
<div class="a" style="left:776px;top:354px;width:1px;height:286px;background:#d9d9d9;"></div>
<svg style="left:48px;top:359.4px" width="9" height="6" viewBox="0 0 9 6" fill="none" stroke="#444" stroke-width="1.1" ><path d="M0.6 0.6 L4.3 4.4 L8 0.6"/></svg>
<span class="t" style="left:67.40px;top:356.00px;font-size:11.5px;line-height:11.5px;color:#000;font-weight:bold;-webkit-text-stroke:0.3px;">P</span>
<span class="t" style="left:100.20px;top:356.00px;font-size:11.5px;line-height:11.5px;color:#000;font-weight:bold;-webkit-text-stroke:0.3px;">1</span>
<span class="t" style="left:239.20px;top:356.00px;font-size:11.5px;line-height:11.5px;color:#000;font-weight:bold;-webkit-text-stroke:0.3px;width:36.80px;overflow:hidden;letter-spacing:0.90px;">Konzep</span>
<span class="t" style="left:302.94px;top:356.00px;font-size:11.5px;line-height:11.5px;color:#000;font-weight:bold;-webkit-text-stroke:0.3px;letter-spacing:1.271px;">08.03.16</span>
<span class="t" style="left:368.04px;top:356.00px;font-size:11.5px;line-height:11.5px;color:#000;font-weight:bold;-webkit-text-stroke:0.3px;letter-spacing:1.271px;">01.04.16</span>
<span class="t" style="left:486.36px;top:356.00px;font-size:11.5px;line-height:11.5px;color:#000;font-weight:bold;-webkit-text-stroke:0.3px;letter-spacing:1.648px;">15</span>
<span class="t" style="left:555.57px;top:356.00px;font-size:11.5px;line-height:11.5px;color:#000;font-weight:bold;-webkit-text-stroke:0.3px;letter-spacing:1.283px;">6,50</span>
<span class="t" style="left:604.77px;top:356.00px;font-size:11.5px;line-height:11.5px;color:#000;font-weight:bold;-webkit-text-stroke:0.3px;letter-spacing:1.283px;">6,50</span>
<span class="t" style="left:697.17px;top:356.00px;font-size:11.5px;line-height:11.5px;color:#000;font-weight:bold;-webkit-text-stroke:0.3px;letter-spacing:1.283px;">3,06</span>
<span class="t" style="left:739.95px;top:356.00px;font-size:11.5px;line-height:11.5px;color:#000;font-weight:bold;-webkit-text-stroke:0.3px;letter-spacing:1.318px;">32,03</span>
<span class="t" style="left:779.40px;top:356.00px;font-size:11.5px;line-height:11.5px;color:#000;font-weight:bold;-webkit-text-stroke:0.3px;letter-spacing:1.026px;">Nein</span>
<svg style="left:68px;top:396px" width="7" height="7" viewBox="0 0 7 7" fill="none" stroke="#000" stroke-width="1" shape-rendering="crispEdges"><path d="M3.5 0 V7 M0 3.5 H7"/></svg>
<span class="t" style="left:99.60px;top:394.00px;font-size:11.5px;line-height:11.5px;color:#000;letter-spacing:0.407px;">1.1</span>
<span class="t" style="left:239.20px;top:394.00px;font-size:11.5px;line-height:11.5px;color:#000;width:36.80px;overflow:hidden;letter-spacing:0.45px;">Konzept</span>
<span class="t" style="left:307.80px;top:394.00px;font-size:11.5px;line-height:11.5px;color:#000;letter-spacing:0.576px;">08.03.16</span>
<span class="t" style="left:372.90px;top:394.00px;font-size:11.5px;line-height:11.5px;color:#000;letter-spacing:0.576px;">13.03.16</span>
<span class="t" style="left:494.40px;top:394.00px;font-size:11.5px;line-height:11.5px;color:#000;">4</span>
<span class="t" style="left:558.00px;top:394.00px;font-size:11.5px;line-height:11.5px;color:#000;letter-spacing:0.473px;">2,00</span>
<span class="t" style="left:607.20px;top:394.00px;font-size:11.5px;line-height:11.5px;color:#000;letter-spacing:0.473px;">2,00</span>
<span class="t" style="left:699.60px;top:394.00px;font-size:11.5px;line-height:11.5px;color:#000;letter-spacing:0.473px;">1,13</span>
<span class="t" style="left:779.40px;top:394.00px;font-size:11.5px;line-height:11.5px;color:#000;letter-spacing:0.016px;">Nein</span>
<svg style="left:68px;top:434px" width="7" height="7" viewBox="0 0 7 7" fill="none" stroke="#000" stroke-width="1" shape-rendering="crispEdges"><path d="M3.5 0 V7 M0 3.5 H7"/></svg>
<span class="t" style="left:99.60px;top:432.00px;font-size:11.5px;line-height:11.5px;color:#000;letter-spacing:0.407px;">1.2</span>
<span class="t" style="left:239.20px;top:432.00px;font-size:11.5px;line-height:11.5px;color:#000;width:36.80px;overflow:hidden;letter-spacing:0.45px;">Grafik</span>
<span class="t" style="left:307.80px;top:432.00px;font-size:11.5px;line-height:11.5px;color:#000;letter-spacing:0.576px;">14.03.16</span>
<span class="t" style="left:372.90px;top:432.00px;font-size:11.5px;line-height:11.5px;color:#000;letter-spacing:0.576px;">20.03.16</span>
<span class="t" style="left:494.40px;top:432.00px;font-size:11.5px;line-height:11.5px;color:#000;">5</span>
<span class="t" style="left:558.00px;top:432.00px;font-size:11.5px;line-height:11.5px;color:#000;letter-spacing:0.473px;">2,00</span>
<span class="t" style="left:607.20px;top:432.00px;font-size:11.5px;line-height:11.5px;color:#000;letter-spacing:0.473px;">2,00</span>
<span class="t" style="left:699.60px;top:432.00px;font-size:11.5px;line-height:11.5px;color:#000;letter-spacing:0.473px;">0,50</span>
<span class="t" style="left:779.40px;top:432.00px;font-size:11.5px;line-height:11.5px;color:#000;letter-spacing:0.016px;">Nein</span>
<svg style="left:68px;top:472px" width="7" height="7" viewBox="0 0 7 7" fill="none" stroke="#000" stroke-width="1" shape-rendering="crispEdges"><path d="M3.5 0 V7 M0 3.5 H7"/></svg>
<span class="t" style="left:99.60px;top:470.00px;font-size:11.5px;line-height:11.5px;color:#000;letter-spacing:0.407px;">1.3</span>
<span class="t" style="left:239.20px;top:470.00px;font-size:11.5px;line-height:11.5px;color:#000;width:36.80px;overflow:hidden;letter-spacing:0.45px;">Screen</span>
<span class="t" style="left:307.80px;top:470.00px;font-size:11.5px;line-height:11.5px;color:#000;letter-spacing:0.576px;">21.03.16</span>
<span class="t" style="left:372.90px;top:470.00px;font-size:11.5px;line-height:11.5px;color:#000;letter-spacing:0.576px;">31.03.16</span>
<span class="t" style="left:494.40px;top:470.00px;font-size:11.5px;line-height:11.5px;color:#000;">5</span>
<span class="t" style="left:558.00px;top:470.00px;font-size:11.5px;line-height:11.5px;color:#000;letter-spacing:0.473px;">2,00</span>
<span class="t" style="left:607.20px;top:470.00px;font-size:11.5px;line-height:11.5px;color:#000;letter-spacing:0.473px;">2,00</span>
<span class="t" style="left:699.60px;top:470.00px;font-size:11.5px;line-height:11.5px;color:#000;letter-spacing:0.473px;">1,00</span>
<span class="t" style="left:779.40px;top:470.00px;font-size:11.5px;line-height:11.5px;color:#000;letter-spacing:0.016px;">Nein</span>
<svg style="left:68px;top:510px" width="7" height="7" viewBox="0 0 7 7" fill="none" stroke="#000" stroke-width="1" shape-rendering="crispEdges"><path d="M3.5 0 V7 M0 3.5 H7"/></svg>
<span class="t" style="left:99.60px;top:508.00px;font-size:11.5px;line-height:11.5px;color:#000;letter-spacing:0.407px;">1.4</span>
<span class="t" style="left:239.20px;top:508.00px;font-size:11.5px;line-height:11.5px;color:#000;width:36.80px;overflow:hidden;letter-spacing:0.45px;">Projekt</span>
<span class="t" style="left:307.80px;top:508.00px;font-size:11.5px;line-height:11.5px;color:#000;letter-spacing:0.576px;">08.03.16</span>
<span class="t" style="left:372.90px;top:508.00px;font-size:11.5px;line-height:11.5px;color:#000;letter-spacing:0.576px;">01.04.16</span>
<span class="t" style="left:488.00px;top:508.00px;font-size:11.5px;line-height:11.5px;color:#000;letter-spacing:0.008px;">15</span>
<span class="t" style="left:558.00px;top:508.00px;font-size:11.5px;line-height:11.5px;color:#000;letter-spacing:0.473px;">0,50</span>
<span class="t" style="left:607.20px;top:508.00px;font-size:11.5px;line-height:11.5px;color:#000;letter-spacing:0.473px;">0,50</span>
<span class="t" style="left:699.60px;top:508.00px;font-size:11.5px;line-height:11.5px;color:#000;letter-spacing:0.473px;">0,44</span>
<span class="t" style="left:779.40px;top:508.00px;font-size:11.5px;line-height:11.5px;color:#000;letter-spacing:0.016px;">Nein</span>
<svg style="left:48px;top:549.4px" width="9" height="6" viewBox="0 0 9 6" fill="none" stroke="#444" stroke-width="1.1" ><path d="M0.6 0.6 L4.3 4.4 L8 0.6"/></svg>
<span class="t" style="left:67.40px;top:546.00px;font-size:11.5px;line-height:11.5px;color:#000;font-weight:bold;-webkit-text-stroke:0.3px;">P</span>
<span class="t" style="left:100.20px;top:546.00px;font-size:11.5px;line-height:11.5px;color:#000;font-weight:bold;-webkit-text-stroke:0.3px;">2</span>
<span class="t" style="left:239.20px;top:546.00px;font-size:11.5px;line-height:11.5px;color:#000;font-weight:bold;-webkit-text-stroke:0.3px;width:36.80px;overflow:hidden;letter-spacing:0.90px;">Umsetz</span>
<span class="t" style="left:302.94px;top:546.00px;font-size:11.5px;line-height:11.5px;color:#000;font-weight:bold;-webkit-text-stroke:0.3px;letter-spacing:1.271px;">02.04.16</span>
<span class="t" style="left:368.04px;top:546.00px;font-size:11.5px;line-height:11.5px;color:#000;font-weight:bold;-webkit-text-stroke:0.3px;letter-spacing:1.271px;">29.04.16</span>
<span class="t" style="left:486.36px;top:546.00px;font-size:11.5px;line-height:11.5px;color:#000;font-weight:bold;-webkit-text-stroke:0.3px;letter-spacing:1.648px;">20</span>
<span class="t" style="left:555.57px;top:546.00px;font-size:11.5px;line-height:11.5px;color:#000;font-weight:bold;-webkit-text-stroke:0.3px;letter-spacing:1.283px;">7,75</span>
<span class="t" style="left:604.77px;top:546.00px;font-size:11.5px;line-height:11.5px;color:#000;font-weight:bold;-webkit-text-stroke:0.3px;letter-spacing:1.283px;">7,75</span>
<span class="t" style="left:697.17px;top:546.00px;font-size:11.5px;line-height:11.5px;color:#000;font-weight:bold;-webkit-text-stroke:0.3px;letter-spacing:1.283px;">5,97</span>
<span class="t" style="left:739.95px;top:546.00px;font-size:11.5px;line-height:11.5px;color:#000;font-weight:bold;-webkit-text-stroke:0.3px;letter-spacing:1.318px;">43,51</span>
<span class="t" style="left:779.40px;top:546.00px;font-size:11.5px;line-height:11.5px;color:#000;font-weight:bold;-webkit-text-stroke:0.3px;letter-spacing:1.026px;">Nein</span>
<svg style="left:68px;top:586px" width="7" height="7" viewBox="0 0 7 7" fill="none" stroke="#000" stroke-width="1" shape-rendering="crispEdges"><path d="M3.5 0 V7 M0 3.5 H7"/></svg>
<span class="t" style="left:99.60px;top:584.00px;font-size:11.5px;line-height:11.5px;color:#000;letter-spacing:0.407px;">2.1</span>
<span class="t" style="left:239.20px;top:584.00px;font-size:11.5px;line-height:11.5px;color:#000;width:36.80px;overflow:hidden;letter-spacing:0.45px;">HTML/J</span>
<span class="t" style="left:307.80px;top:584.00px;font-size:11.5px;line-height:11.5px;color:#000;letter-spacing:0.576px;">02.04.16</span>
<span class="t" style="left:372.90px;top:584.00px;font-size:11.5px;line-height:11.5px;color:#000;letter-spacing:0.576px;">08.04.16</span>
<span class="t" style="left:494.40px;top:584.00px;font-size:11.5px;line-height:11.5px;color:#000;">5</span>
<span class="t" style="left:558.00px;top:584.00px;font-size:11.5px;line-height:11.5px;color:#000;letter-spacing:0.473px;">2,00</span>
<span class="t" style="left:607.20px;top:584.00px;font-size:11.5px;line-height:11.5px;color:#000;letter-spacing:0.473px;">2,00</span>
<span class="t" style="left:699.60px;top:584.00px;font-size:11.5px;line-height:11.5px;color:#000;letter-spacing:0.473px;">2,25</span>
<span class="t" style="left:779.40px;top:584.00px;font-size:11.5px;line-height:11.5px;color:#000;letter-spacing:0.016px;">Nein</span>
<svg style="left:68px;top:624px" width="7" height="7" viewBox="0 0 7 7" fill="none" stroke="#000" stroke-width="1" shape-rendering="crispEdges"><path d="M3.5 0 V7 M0 3.5 H7"/></svg>
<span class="t" style="left:99.60px;top:622.00px;font-size:11.5px;line-height:11.5px;color:#000;letter-spacing:0.407px;">2.2</span>
<span class="t" style="left:239.20px;top:622.00px;font-size:11.5px;line-height:11.5px;color:#000;width:36.80px;overflow:hidden;letter-spacing:0.45px;">CMS In</span>
<span class="t" style="left:307.80px;top:622.00px;font-size:11.5px;line-height:11.5px;color:#000;letter-spacing:0.576px;">09.04.16</span>
<span class="t" style="left:372.90px;top:622.00px;font-size:11.5px;line-height:11.5px;color:#000;letter-spacing:0.576px;">15.04.16</span>
<span class="t" style="left:494.40px;top:622.00px;font-size:11.5px;line-height:11.5px;color:#000;">5</span>
<span class="t" style="left:558.00px;top:622.00px;font-size:11.5px;line-height:11.5px;color:#000;letter-spacing:0.473px;">1,75</span>
<span class="t" style="left:607.20px;top:622.00px;font-size:11.5px;line-height:11.5px;color:#000;letter-spacing:0.473px;">1,75</span>
<span class="t" style="left:699.60px;top:622.00px;font-size:11.5px;line-height:11.5px;color:#000;letter-spacing:0.473px;">1,13</span>
<span class="t" style="left:779.40px;top:622.00px;font-size:11.5px;line-height:11.5px;color:#000;letter-spacing:0.016px;">Nein</span>
<div class="a" style="left:828px;top:316px;width:17px;height:324px;background:#f0f0f0;"></div>
<div class="a" style="left:827px;top:354px;width:1px;height:286px;background:#e2e2e2;"></div>
<div class="a" style="left:845px;top:315px;width:1px;height:342px;background:#bdbdbd;"></div>
<div class="a" style="left:829.5px;top:333px;width:14.5px;height:38px;background:#cdcdcd;"></div>
<svg style="left:832px;top:322.2px" width="9" height="6" viewBox="0 0 9 6" fill="none" stroke="#505050" stroke-width="2.2" ><path d="M0.8 5 L4.4 1.4 L8 5"/></svg>
<svg style="left:832px;top:630px" width="9" height="6" viewBox="0 0 9 6" fill="none" stroke="#505050" stroke-width="2.2" ><path d="M0.8 1 L4.4 4.6 L8 1"/></svg>
<div class="a" style="left:45px;top:640px;width:800px;height:17px;background:#f0f0f0;"></div>
<div class="a" style="left:67px;top:641px;width:508.5px;height:15px;background:#cdcdcd;"></div>
<div class="a" style="left:44px;top:657px;width:802px;height:1px;background:#bdbdbd;"></div>
<div class="a" style="left:45px;top:640px;width:4px;height:16px;background:#fff;"></div>
<div class="a" style="left:49px;top:640px;width:1px;height:17px;background:#000;"></div>
<div class="a" style="left:45px;top:656px;width:5px;height:1px;background:#000;"></div>
<svg style="left:55px;top:644.6px" width="7" height="8" viewBox="0 0 7 8" fill="none" stroke="#505050" stroke-width="2.2" ><path d="M5.6 0.8 L1.6 4 L5.6 7.2"/></svg>
<svg style="left:817.5px;top:644.6px" width="7" height="8" viewBox="0 0 7 8" fill="none" stroke="#505050" stroke-width="2.2" ><path d="M1.4 0.8 L5.4 4 L1.4 7.2"/></svg>
<span class="t" style="left:46.00px;top:684.00px;font-size:11.5px;line-height:11.5px;color:#000;letter-spacing:0.499px;">Rabatt gepl.</span>
<span class="t" style="left:274.30px;top:684.00px;font-size:11.5px;line-height:11.5px;color:#000;letter-spacing:0.674px;">Rohertrag gepl.</span>
<span class="t" style="left:523.30px;top:684.00px;font-size:11.5px;line-height:11.5px;color:#000;letter-spacing:0.522px;">MwSt. gepl.</span>
<span class="t" style="left:691.20px;top:684.00px;font-size:11.5px;line-height:11.5px;color:#000;letter-spacing:0.545px;">Umsatz gepl.</span>
<div class="ro" style="left:119px;top:681px;width:92px;height:17px;border-color:#adadad;"></div>
<span class="t" style="left:158.40px;top:684.00px;font-size:11.5px;line-height:11.5px;color:#000;letter-spacing:0.049px;">0,00 EUR</span>
<div class="ro" style="left:214px;top:681px;width:57px;height:17px;border-color:#adadad;"></div>
<span class="t" style="left:244.60px;top:684.00px;font-size:11.5px;line-height:11.5px;color:#000;letter-spacing:0.539px;">0,00</span>
<div class="ro" style="left:369px;top:681px;width:92px;height:17px;border-color:#adadad;"></div>
<span class="t" style="left:376.40px;top:684.00px;font-size:11.5px;line-height:11.5px;color:#000;letter-spacing:0.297px;">10.559,69 EUR</span>
<div class="ro" style="left:464px;top:681px;width:57px;height:17px;border-color:#adadad;"></div>
<span class="t" style="left:487.60px;top:684.00px;font-size:11.5px;line-height:11.5px;color:#000;letter-spacing:0.555px;">47,73</span>
<div class="ro" style="left:594px;top:681px;width:92px;height:17px;border-color:#adadad;"></div>
<span class="t" style="left:608.40px;top:684.00px;font-size:11.5px;line-height:11.5px;color:#000;letter-spacing:0.269px;">4.203,18 EUR</span>
<div class="ro" style="left:769px;top:681px;width:106px;height:17px;border-color:#adadad;"></div>
<span class="t" style="left:790.40px;top:684.00px;font-size:11.5px;line-height:11.5px;color:#000;letter-spacing:0.297px;">22.121,99 EUR</span>
<div class="a" style="left:1258px;top:700px;width:17px;height:17px;background:#f0f0f0;"></div>
<div class="a" style="left:1270px;top:707px;width:2px;height:2px;background:#b5b5b5;"></div>
<div class="a" style="left:1267px;top:710px;width:2px;height:2px;background:#b5b5b5;"></div>
<div class="a" style="left:1270px;top:710px;width:2px;height:2px;background:#b5b5b5;"></div>
<div class="a" style="left:1264px;top:713px;width:2px;height:2px;background:#b5b5b5;"></div>
<div class="a" style="left:1267px;top:713px;width:2px;height:2px;background:#b5b5b5;"></div>
<div class="a" style="left:1270px;top:713px;width:2px;height:2px;background:#b5b5b5;"></div>
<div class="a" style="left:849px;top:314px;width:395px;height:343px;background:#8e8e8e;"></div>
<div class="a" style="left:850px;top:315px;width:394px;height:342px;background:#fff;border:1px solid #000;"></div>
<span class="t" style="left:871.20px;top:318.00px;font-size:12px;line-height:12px;color:#000;font-weight:bold;letter-spacing:0.948px;">1/16</span>
<span class="t" style="left:936.00px;top:318.00px;font-size:12px;line-height:12px;color:#000;font-weight:bold;letter-spacing:0.948px;">2/16</span>
<span class="t" style="left:1001.00px;top:318.00px;font-size:12px;line-height:12px;color:#000;font-weight:bold;letter-spacing:0.948px;">3/16</span>
<span class="t" style="left:1066.00px;top:318.00px;font-size:12px;line-height:12px;color:#000;font-weight:bold;letter-spacing:0.948px;">4/16</span>
<span class="t" style="left:1130.80px;top:318.00px;font-size:12px;line-height:12px;color:#000;font-weight:bold;letter-spacing:0.948px;">5/16</span>
<span class="t" style="left:1195.60px;top:318.00px;font-size:12px;line-height:12px;color:#000;font-weight:bold;letter-spacing:0.948px;">6/16</span>
<span class="t" style="left:1055.00px;top:339.00px;font-size:12px;line-height:12px;color:#000;letter-spacing:-1.734px;">AF</span>
<div class="a" style="left:1075px;top:337px;width:5.2999999999999545px;height:17px;background:#0026ff;"></div>
<div class="a" style="left:995px;top:354.3px;width:17px;height:17.30000000000001px;background:#0070c0;"></div>
<div class="a" style="left:1012px;top:354.3px;width:36px;height:5.699999999999989px;background:#004b82;"></div>
<div class="a" style="left:1012px;top:360px;width:36px;height:11.600000000000023px;background:#0099ff;"></div>
<div class="a" style="left:995px;top:520px;width:53px;height:3.3999999999999773px;background:#0070c0;"></div>
<span class="t" style="left:995.00px;top:526.00px;font-size:12px;line-height:12px;color:#000;letter-spacing:-0.070px;">HB</span>
<div class="a" style="left:1016.2px;top:523.4px;width:4.7999999999999545px;height:19.399999999999977px;background:#0026ff;"></div>
<div class="a" style="left:1048px;top:544.3px;width:26px;height:17.700000000000045px;background:#0070c0;"></div>
<div class="a" style="left:1074px;top:544.3px;width:33px;height:5.900000000000091px;background:#004b82;"></div>
<div class="a" style="left:1074px;top:550.2px;width:33px;height:11.799999999999955px;background:#0099ff;"></div>
<div class="a" style="left:1048px;top:581.7px;width:15px;height:18.299999999999955px;background:#0099ff;"></div>
<span class="t" style="left:1030.30px;top:602.00px;font-size:12px;line-height:12px;color:#000;letter-spacing:-1.734px;">AF</span>
<div class="a" style="left:1048px;top:600px;width:5px;height:18.5px;background:#0026ff;"></div>
<div class="a" style="left:1063px;top:620px;width:15.299999999999955px;height:17.700000000000045px;background:#ff6600;"></div>
<svg style="left:0;top:0" width="1298" height="740" viewBox="0 0 1298 740" fill="none" stroke="#000" stroke-width="1"><path d="M1048 363.5 H1052.5 V576.5 H1038.5 V589.5 H1044"/><path d="M1052.5 538.5 H1038.5 V552.5 H1044"/><path d="M1107 553.5 H1111.5 V641"/><path d="M1063 591.5 H1067.5 V614.5 H1053.5 V628.5 H1059"/><path d="M1078.3 629.5 H1082.5 V641"/><path d="M1043.4 548.8 L1048 552.5 L1043.4 556.2 Z M1043.4 585.8 L1048 589.5 L1043.4 593.2 Z M1058.6 624.8 L1063.2 628.5 L1058.6 632.2 Z" fill="#000" stroke="none"/></svg>
<div class="a" style="left:851px;top:641px;width:392px;height:15px;background:#cbcbcb;"></div>
<div class="a" style="left:947.5999999999999px;top:641px;width:1.400000000000091px;height:15px;background:#f2f2f2;"></div>
<div class="a" style="left:1045.7px;top:641px;width:1.400000000000091px;height:15px;background:#f2f2f2;"></div>
<div class="a" style="left:1143.5px;top:641px;width:1.400000000000091px;height:15px;background:#f2f2f2;"></div>
<svg style="left:893px;top:643px" width="13" height="11" viewBox="0 0 13 11" fill="none" stroke="#fff" stroke-width="1.6" ><path d="M6.4 1 L1 5.4 L6.4 9.8 V7.4 H11.4 V3.4 H6.4 Z" fill="#6f86ee" stroke="#3c50c8" stroke-width=".9"/></svg>
<svg style="left:989px;top:643px" width="18" height="11" viewBox="0 0 18 11" fill="none" stroke="#fff" stroke-width="1.6" ><path d="M6 1.2 L1 5.4 L6 9.6" stroke="#8c9cf0" stroke-width="1.2"/><g transform="translate(5,0)"><path d="M6.4 1 L1 5.4 L6.4 9.8 V7.4 H11.4 V3.4 H6.4 Z" fill="#6f86ee" stroke="#3c50c8" stroke-width=".9"/></g></svg>
<svg style="left:1088px;top:643px" width="18" height="11" viewBox="0 0 18 11" fill="none" stroke="#fff" stroke-width="1.6" ><path d="M6 1 L11.4 5.4 L6 9.8 V7.4 H1 V3.4 H6 Z" fill="#6f86ee" stroke="#3c50c8" stroke-width=".9"/><path d="M12 1.2 L17 5.4 L12 9.6" stroke="#8c9cf0" stroke-width="1.2"/></svg>
<svg style="left:1188.5px;top:643px" width="13" height="11" viewBox="0 0 13 11" fill="none" stroke="#fff" stroke-width="1.6" ><path d="M6 1 L11.4 5.4 L6 9.8 V7.4 H1 V3.4 H6 Z" fill="#6f86ee" stroke="#3c50c8" stroke-width=".9"/></svg>
<div class="a" style="left:905px;top:385px;width:235.5px;height:135.60000000000002px;background:#f0f0f0;border:1px solid #9b9b9b;box-shadow:2.5px 2.5px 3px rgba(0,0,0,.45);"></div>
<div class="a" style="left:935px;top:387px;width:1px;height:132px;background:#d2d2d2;"></div>
<div class="a" style="left:936px;top:387px;width:1px;height:132px;background:#fff;"></div>
<div class="a" style="left:937px;top:413px;width:201px;height:1px;background:#d9d9d9;"></div>
<div class="a" style="left:937px;top:414px;width:201px;height:1px;background:#fff;"></div>
<div class="a" style="left:937px;top:493px;width:201px;height:1px;background:#d9d9d9;"></div>
<div class="a" style="left:937px;top:494px;width:201px;height:1px;background:#fff;"></div>
<div class="a" style="left:907.6px;top:468.2px;width:230.39999999999998px;height:21.400000000000034px;background:#d3e3f3;border:1px solid #7db2e8;"></div>
<span class="t" style="left:940.20px;top:393.00px;font-size:12px;line-height:12px;color:#111;letter-spacing:-0.077px;">Projektplanung ausschalten</span>
<span class="t" style="left:940.20px;top:422.00px;font-size:12px;line-height:12px;color:#111;letter-spacing:-0.117px;">Auslastung berechnen</span>
<span class="t" style="left:940.20px;top:444.00px;font-size:12px;line-height:12px;color:#111;letter-spacing:-0.092px;">Auslastung löschen</span>
<span class="t" style="left:940.20px;top:473.00px;font-size:12px;line-height:12px;color:#111;letter-spacing:0.058px;">Ansicht</span>
<span class="t" style="left:940.20px;top:502.00px;font-size:12px;line-height:12px;color:#111;letter-spacing:0.006px;">Projektplanung drucken</span>
<div class="a" style="left:906.5px;top:454.4px;width:240.5px;height:54.0px;border:3.7px solid #ff8209;border-radius:27px;filter:drop-shadow(2.5px 3.5px 2px rgba(0,0,0,.7));"></div>
<svg style="left:1067.5px;top:483px" width="14" height="21" viewBox="0 0 14 21"><path d="M1 1 V16.6 L4.6 13.2 L7.4 19.6 L9.8 18.6 L7 12.4 H12 Z" fill="#fff" stroke="#222" stroke-width="1" stroke-linejoin="round"/></svg>
</body></html>
